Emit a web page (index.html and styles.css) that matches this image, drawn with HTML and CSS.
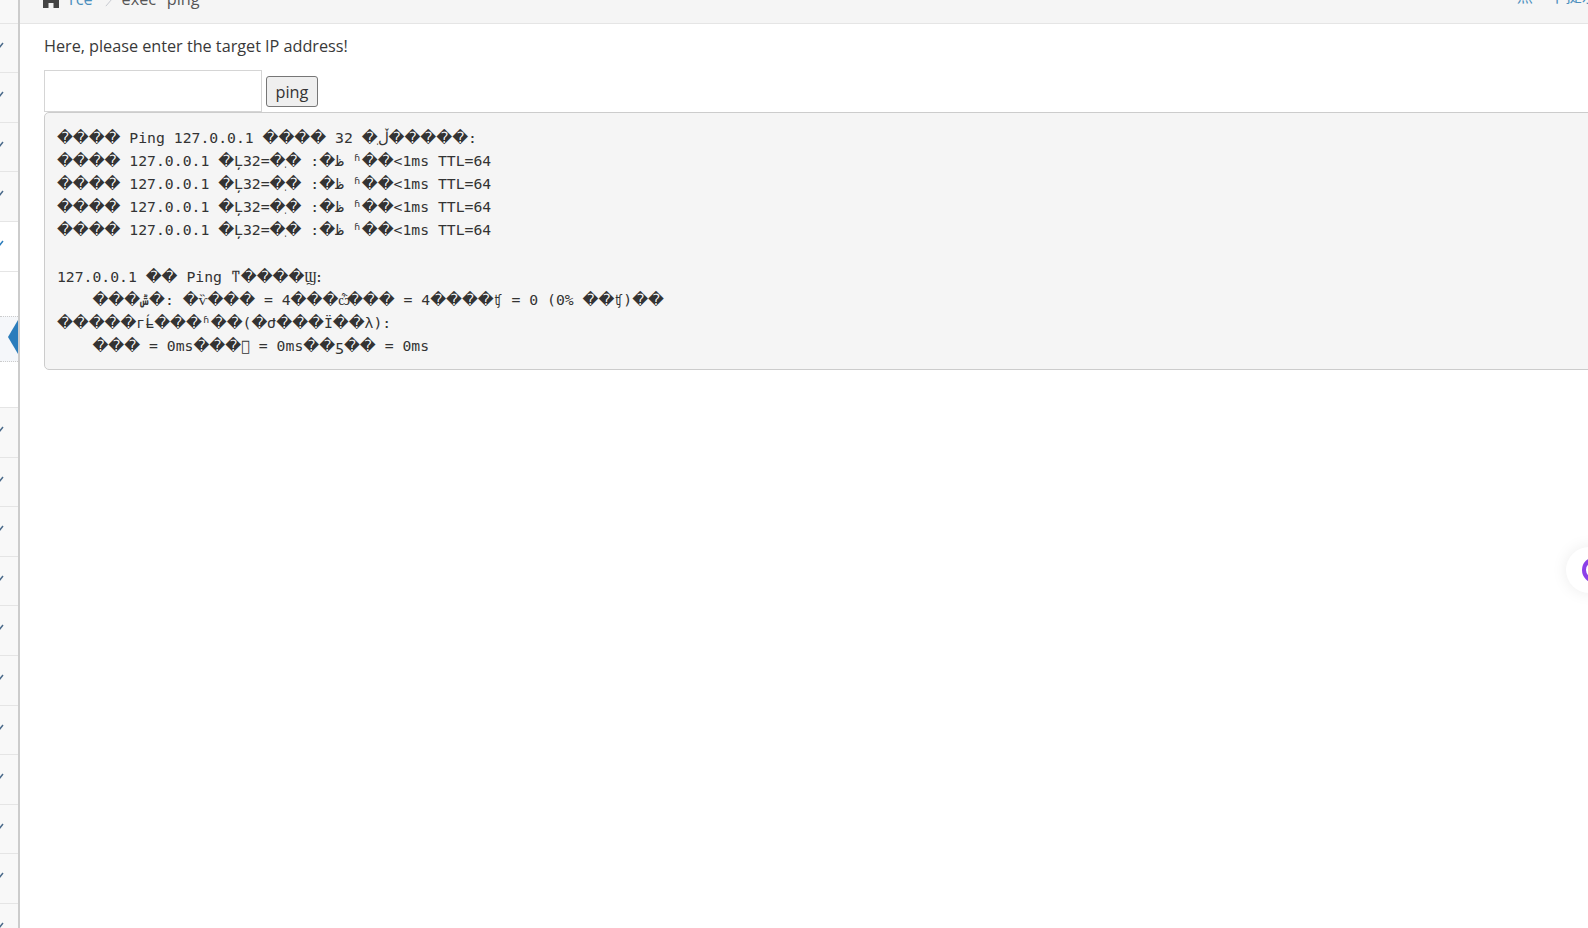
FILE: index.html
```html
<!DOCTYPE html>
<html lang="en">
<head>
<meta charset="utf-8">
<title>exec "ping"</title>
<link rel="stylesheet" href="styles.css">
</head>
<body>
<div class="layout">
  <aside class="sidebar">
    <div class="row row-first"></div>
    <div class="row"><svg class="chev" viewBox="0 0 4 6"><path d="M-2 5 0 6 4 1"/></svg></div>
    <div class="row"><svg class="chev" viewBox="0 0 4 6"><path d="M-2 5 0 6 4 1"/></svg></div>
    <div class="row"><svg class="chev" viewBox="0 0 4 6"><path d="M-2 5 0 6 4 1"/></svg></div>
    <div class="row"><svg class="chev" viewBox="0 0 4 6"><path d="M-2 5 0 6 4 1"/></svg></div>
    <div class="open">
      <div class="row row-open"><svg class="chev chev-blue" viewBox="0 0 4 6"><path d="M-2 5 0 6 4 1"/></svg></div>
      <div class="sub sub-plain"></div>
      <div class="sub sub-active"><span class="arrow"></span></div>
      <div class="sub sub-plain"></div>
    </div>
    <div class="row"><svg class="chev" viewBox="0 0 4 6"><path d="M-2 5 0 6 4 1"/></svg></div>
    <div class="row"><svg class="chev" viewBox="0 0 4 6"><path d="M-2 5 0 6 4 1"/></svg></div>
    <div class="row"><svg class="chev" viewBox="0 0 4 6"><path d="M-2 5 0 6 4 1"/></svg></div>
    <div class="row"><svg class="chev" viewBox="0 0 4 6"><path d="M-2 5 0 6 4 1"/></svg></div>
    <div class="row"><svg class="chev" viewBox="0 0 4 6"><path d="M-2 5 0 6 4 1"/></svg></div>
    <div class="row"><svg class="chev" viewBox="0 0 4 6"><path d="M-2 5 0 6 4 1"/></svg></div>
    <div class="row"><svg class="chev" viewBox="0 0 4 6"><path d="M-2 5 0 6 4 1"/></svg></div>
    <div class="row"><svg class="chev" viewBox="0 0 4 6"><path d="M-2 5 0 6 4 1"/></svg></div>
    <div class="row"><svg class="chev" viewBox="0 0 4 6"><path d="M-2 5 0 6 4 1"/></svg></div>
    <div class="row"><svg class="chev" viewBox="0 0 4 6"><path d="M-2 5 0 6 4 1"/></svg></div>
    <div class="row"><svg class="chev" viewBox="0 0 4 6"><path d="M-2 5 0 6 4 1"/></svg></div>
  </aside>
  <main class="main">
    <div class="crumbbar">
      <div class="crumbs">
        <svg class="home" viewBox="0 0 18 16"><path d="M9 0 0 8h1v8h5.500v-5h5v5h5.500V8h1z"/></svg>
        <a class="crumb-link">rce</a>
        <svg class="crumb-sep" viewBox="0 0 8 16"><path d="M1 1 7 8 1 15"/></svg>
        <span class="crumb-current">exec "ping"</span>
      </div>
      <a class="tip">点一下提示~</a>
    </div>
    <div class="content">
      <p class="label">Here, please enter the target IP address!</p>
      <form class="ping-form">
        <input class="ip-input" type="text"><button class="ping-btn" type="button">ping</button>
      </form>
      <pre class="result"><span class="r">����</span> Ping 127.0.0.1 <span class="r">����</span> 32 <span class="r">�</span>ֽ<span class="t5">ڵ</span><span class="r">�����</span>:
<span class="r">����</span> 127.0.0.1 <span class="r">�</span>Ļظ<span class="r">�</span>: <span class="r">�</span>ֽ<span class="r">�</span>=32 ʱ<span class="r">��</span>&lt;1ms TTL=64
<span class="r">����</span> 127.0.0.1 <span class="r">�</span>Ļظ<span class="r">�</span>: <span class="r">�</span>ֽ<span class="r">�</span>=32 ʱ<span class="r">��</span>&lt;1ms TTL=64
<span class="r">����</span> 127.0.0.1 <span class="r">�</span>Ļظ<span class="r">�</span>: <span class="r">�</span>ֽ<span class="r">�</span>=32 ʱ<span class="r">��</span>&lt;1ms TTL=64
<span class="r">����</span> 127.0.0.1 <span class="r">�</span>Ļظ<span class="r">�</span>: <span class="r">�</span>ֽ<span class="r">�</span>=32 ʱ<span class="r">��</span>&lt;1ms TTL=64

127.0.0.1 <span class="r">��</span> Ping ͳ<span class="r">����</span><span class="t2">Ϣ</span>:
    <span class="r">���</span><span class="t7">ݰ</span><span class="r">�</span>: <span class="r">�</span>ѷ<span class="r">���</span> = 4<span class="r">���</span><span class="t3">ѽ</span><span class="r">���</span> = 4<span class="r">����</span>ʧ = 0 (0% <span class="r">��</span>ʧ)<span class="r">��</span>
<span class="r">�����</span>г<span class="mark">̵</span>Ĺ<span class="r">���</span>ʱ<span class="r">��</span>(<span class="r">�</span>Ժ<span class="r">���</span>Ϊ<span class="r">��</span>λ):
    <span class="r">���</span> = 0ms<span class="r">���</span>&#xECE4; = 0ms<span class="r">��</span>ƽ<span class="r">��</span> = 0ms</pre>
    </div>
  </main>
</div>
<div class="widget"><span class="ring"></span></div>
</body>
</html>
```
FILE: styles.css
```css
* { box-sizing: border-box; }
html, body { margin: 0; padding: 0; height: 100%; overflow: hidden; background: #fff; }
body { font-family: "Open Sans", sans-serif; font-size: 16.25px; line-height: 1.42857; color: #393939; }
.layout { display: flex; height: 928px; }
.sidebar { width: 20px; flex: none; background: #f8f8f8; border-right: 2px solid #ccc; display: flex; flex-direction: column; overflow: hidden; }
.row { flex: none; height: 49.6px; border-top: 1px solid #e5e5e5; padding-top: 18px; }
.row-first { height: 22.6px; border-top: 0; padding: 0; }
.chev { display: block; width: 4px; height: 6px; margin-left: -1px; overflow: visible; }
.chev path { fill: none; stroke: #4a6a8a; stroke-width: 1.5; }
.chev-blue path { stroke: #2b7dbc; }
.open { flex: none; margin-right: -2px; border-right: 2px solid #2b7dbc; background: #fff; }
.row-open { background: #fff; }
.sub { height: 45.5px; background: #fff; }
.row-open + .sub { border-top: 1px solid #e5e5e5; }
.sub-active { position: relative; background: #f5f7fa; border-top: 1px dotted #ccc; border-bottom: 1px dotted #ccc; }
.arrow { position: absolute; right: 0; top: 3px; border-style: solid; border-width: 17px 10px 17px 0; border-color: transparent #2b7dbc transparent transparent; }
.main { flex: 1; min-width: 0; overflow: hidden; }
.crumbbar { height: 24px; background: #f5f5f5; border-bottom: 1px solid #e5e5e5; display: flex; justify-content: space-between; overflow: hidden; padding: 0 0 0 22px; }
.crumbs { display: flex; align-items: center; margin-top: -12px; height: 23px; }
.home { width: 18px; height: 16px; fill: #444; margin-right: 9px; }
.crumb-link, .tip { color: #4c8fbd; }
.crumb-sep { width: 7px; height: 16px; margin: 0 10px 0 12px; fill: none; stroke: #c0c4cc; stroke-width: 1; }
.crumb-current { color: #555; }
.tip { flex: none; margin-top: -16px; margin-right: -19px; font-family: "Noto Sans CJK SC", sans-serif; white-space: nowrap; }
.content { padding: 11px 0 0 24px; }
.label { margin: 0 0 11px; height: 24px; letter-spacing: -0.03px; }
.ping-form { display: flex; align-items: flex-end; }
.ip-input { width: 218px; height: 42px; border: 1px solid #d5d5d5; background: #fff; margin-right: 4px; padding: 0; }
.ping-btn { width: 52px; height: 31px; margin-bottom: 5px; padding: 2px 0 0; font: inherit; color: #333; background: #efefef; border: 1px solid #767676; border-radius: 3px; }
.result { width: 1600px; margin: 0; padding: 12.5px 11.9px 11.3px; font-family: "DejaVu Sans Mono", monospace; font-size: 14.75px; line-height: 23.2px; color: #333; background: #f5f5f5; border: 1px solid #ccc; border-radius: 5px; }
.r { font-family: "DejaVu Sans", sans-serif; font-size: 15.5px; line-height: 1; }
.t2 { letter-spacing: -2px; }
.t3 { letter-spacing: -3px; }
.t5 { letter-spacing: -5px; }
.t7 { letter-spacing: -7px; }
.mark { letter-spacing: -8.85px; }
.widget { position: absolute; left: 1566px; top: 547px; width: 46px; height: 46px; border-radius: 50%; background: #fff; box-shadow: 0 0 16px rgba(0,0,0,.08); }
.ring { position: absolute; left: 16px; top: 10px; width: 26px; height: 26px; border-radius: 50%; border: 4px solid #8b3fe8; }
```
